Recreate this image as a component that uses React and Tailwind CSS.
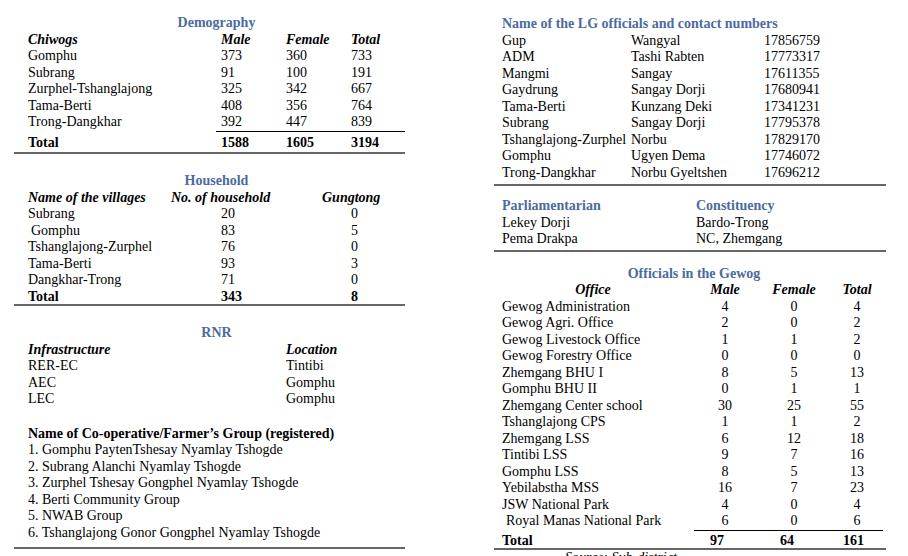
const demo = [
  ["Gomphu", "373", "360", "733"],
  ["Subrang", "91", "100", "191"],
  ["Zurphel-Tshanglajong", "325", "342", "667"],
  ["Tama-Berti", "408", "356", "764"],
  ["Trong-Dangkhar", "392", "447", "839"],
];

const house = [
  ["Subrang", "20", "0", ""],
  ["Gomphu", "83", "5", "pl-[3px]"],
  ["Tshanglajong-Zurphel", "76", "0", ""],
  ["Tama-Berti", "93", "3", ""],
  ["Dangkhar-Trong", "71", "0", ""],
];

const rnr = [
  ["RER-EC", "Tintibi"],
  ["AEC", "Gomphu"],
  ["LEC", "Gomphu"],
];

const groups = [
  "1. Gomphu PaytenTshesay Nyamlay Tshogde",
  "2. Subrang Alanchi Nyamlay Tshogde",
  "3. Zurphel Tshesay Gongphel Nyamlay Tshogde",
  "4. Berti Community Group",
  "5. NWAB Group",
  "6. Tshanglajong Gonor Gongphel Nyamlay Tshogde",
];

const lg = [
  ["Gup", "Wangyal", "17856759"],
  ["ADM", "Tashi Rabten", "17773317"],
  ["Mangmi", "Sangay", "17611355"],
  ["Gaydrung", "Sangay Dorji", "17680941"],
  ["Tama-Berti", "Kunzang Deki", "17341231"],
  ["Subrang", "Sangay Dorji", "17795378"],
  ["Tshanglajong-Zurphel", "Norbu", "17829170"],
  ["Gomphu", "Ugyen Dema", "17746072"],
  ["Trong-Dangkhar", "Norbu Gyeltshen", "17696212"],
];

const officials = [
  ["Gewog Administration", "4", "0", "4"],
  ["Gewog Agri. Office", "2", "0", "2"],
  ["Gewog Livestock Office", "1", "1", "2"],
  ["Gewog Forestry Office", "0", "0", "0"],
  ["Zhemgang BHU I", "8", "5", "13"],
  ["Gomphu BHU II", "0", "1", "1"],
  ["Zhemgang Center school", "30", "25", "55"],
  ["Tshanglajong CPS", "1", "1", "2"],
  ["Zhemgang LSS", "6", "12", "18"],
  ["Tintibi LSS", "9", "7", "16"],
  ["Gomphu LSS", "8", "5", "13"],
  ["Yebilabstha MSS", "16", "7", "23"],
  ["JSW National Park", "4", "0", "4"],
  ["Royal Manas National Park", "6", "0", "6"],
];

const row = "h-[16.5px] leading-[16.5px] whitespace-nowrap";
const blue = "text-[#4b6b9e] font-bold";

export default function App() {
  return (
    <div className="w-[908px] h-[556px] overflow-hidden bg-white text-black text-[14px] leading-[16.5px] font-['Liberation_Serif','Times_New_Roman',serif] flex items-start pt-[15px]">
      {/* LEFT COLUMN */}
      <div className="ml-[14px] w-[391px] flex flex-col">
        {/* Demography */}
        <div className={`pl-[14px] text-center ${row} ${blue}`}>Demography</div>
        <div className="pl-[14px]">
          <div className={`grid grid-cols-[193px_65px_65px_1fr] italic font-bold ${row}`}>
            <span>Chiwogs</span>
            <span>Male</span>
            <span>Female</span>
            <span>Total</span>
          </div>
          {demo.map((r) => (
            <div key={r[0]} className={`grid grid-cols-[193px_65px_65px_1fr] ${row}`}>
              {r.map((c, i) => (
                <span key={i}>{c}</span>
              ))}
            </div>
          ))}
        </div>
        <div className="ml-[202px] h-px bg-black" />
        <div className={`mt-[3px] pl-[14px] grid grid-cols-[193px_65px_65px_1fr] font-bold ${row}`}>
          <span>Total</span>
          <span>1588</span>
          <span>1605</span>
          <span>3194</span>
        </div>
        <div className="mt-px h-[2px] bg-[#666]" />

        {/* Household */}
        <div className={`mt-[19px] pl-[14px] text-center ${row} ${blue}`}>Household</div>
        <div className="pl-[14px]">
          <div className={`grid grid-cols-[143px_151px_1fr] italic font-bold ${row}`}>
            <span>Name of the villages</span>
            <span>No. of household</span>
            <span>Gungtong</span>
          </div>
          {house.map((r) => (
            <div key={r[0]} className={`grid grid-cols-[193px_130px_1fr] ${row}`}>
              <span className={r[3]}>{r[0]}</span>
              <span>{r[1]}</span>
              <span>{r[2]}</span>
            </div>
          ))}
          <div className={`grid grid-cols-[193px_130px_1fr] font-bold ${row}`}>
            <span>Total</span>
            <span>343</span>
            <span>8</span>
          </div>
        </div>
        <div className="-mt-px h-[2px] bg-[#666]" />

        {/* RNR */}
        <div className={`mt-[19px] pl-[14px] text-center ${row} ${blue}`}>RNR</div>
        <div className="pl-[14px]">
          <div className={`grid grid-cols-[258px_1fr] italic font-bold ${row}`}>
            <span>Infrastructure</span>
            <span>Location</span>
          </div>
          {rnr.map((r) => (
            <div key={r[0]} className={`grid grid-cols-[258px_1fr] ${row}`}>
              <span>{r[0]}</span>
              <span>{r[1]}</span>
            </div>
          ))}
          <div className={`mt-[18px] font-bold ${row}`}>
            Name of Co-operative/Farmer’s Group (registered)
          </div>
          {groups.map((g) => (
            <div key={g} className={row}>
              {g}
            </div>
          ))}
        </div>
        <div className="mt-[6px] h-[2px] bg-[#666]" />
      </div>

      {/* RIGHT COLUMN */}
      <div className="ml-[89px] w-[392px] flex flex-col pt-px">
        <div className={`pl-[8px] ${row} ${blue}`}>Name of the LG officials and contact numbers</div>
        <div className="pl-[8px]">
          {lg.map((r) => (
            <div key={r[0] + r[2]} className={`grid grid-cols-[129px_133px_1fr] ${row}`}>
              <span>{r[0]}</span>
              <span>{r[1]}</span>
              <span>{r[2]}</span>
            </div>
          ))}
        </div>
        <div className="mt-[3px] h-[2px] bg-[#666]" />

        {/* Parliamentarian */}
        <div className="mt-[12px] pl-[8px]">
          <div className={`grid grid-cols-[194px_1fr] ${row} ${blue}`}>
            <span>Parliamentarian</span>
            <span>Constituency</span>
          </div>
          <div className={`grid grid-cols-[194px_1fr] ${row}`}>
            <span>Lekey Dorji</span>
            <span>Bardo-Trong</span>
          </div>
          <div className={`grid grid-cols-[194px_1fr] ${row}`}>
            <span>Pema Drakpa</span>
            <span>NC, Zhemgang</span>
          </div>
        </div>
        <div className="mt-[2px] h-[2px] bg-[#666]" />

        {/* Officials */}
        <div className={`mt-[14px] pl-[8px] text-center ${row} ${blue}`}>Officials in the Gewog</div>
        <div className="pl-[8px]">
          <div className={`grid grid-cols-[188px_70px_68px_1fr] text-center italic font-bold ${row}`}>
            <span className="pr-[6px]">Office</span>
            <span>Male</span>
            <span>Female</span>
            <span>Total</span>
          </div>
          {officials.map((r, idx) => (
            <div key={r[0]} className={`grid grid-cols-[188px_70px_68px_1fr] text-center ${row}`}>
              <span className={`text-left ${idx === officials.length - 1 ? "pl-[4px]" : ""}`}>{r[0]}</span>
              <span>{r[1]}</span>
              <span>{r[2]}</span>
              <span>{r[3]}</span>
            </div>
          ))}
        </div>
        <div className="ml-[200px] w-[189px] h-px bg-black" />
        <div className={`mt-[2px] pl-[8px] grid grid-cols-[188px_70px_68px_1fr] font-bold ${row}`}>
          <span>Total</span>
          <span className="pl-[20px]">97</span>
          <span className="pl-[20px]">64</span>
          <span className="pl-[15px]">161</span>
        </div>
        <div className="-mt-px h-[2px] bg-[#666]" />
        <div className={`pl-[71px] italic ${row}`}>Source: Sub-district</div>
      </div>
    </div>
  );
}
